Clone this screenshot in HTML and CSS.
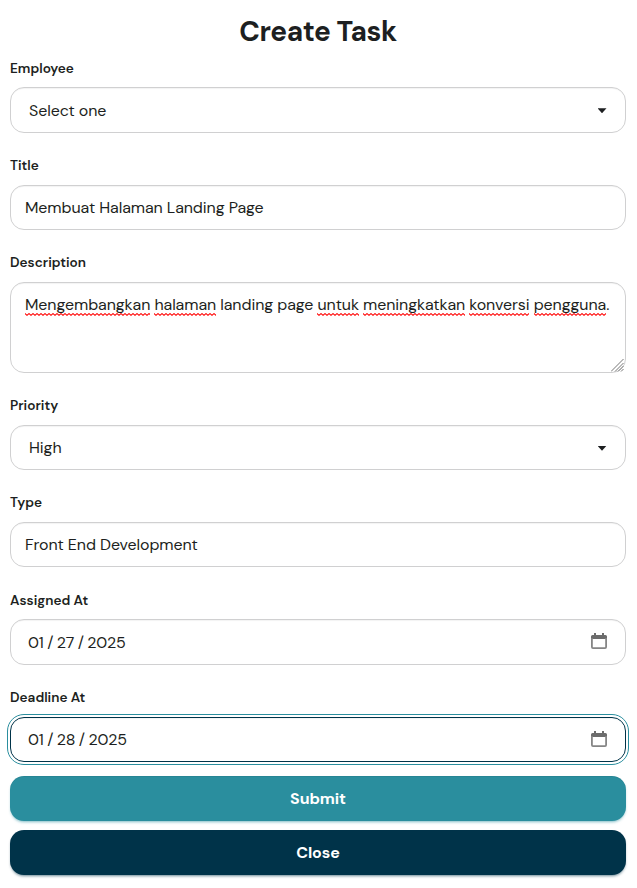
FILE: index.html
```html
<!DOCTYPE html>
<html lang="en">
<head>
<meta charset="utf-8">
<title>Create Task</title>
<link rel="stylesheet" href="styles.css">
</head>
<body>
<form class="task-form">
  <h1 class="heading">Create Task</h1>
  <div class="field">
    <div class="label">Employee</div>
    <div class="control select"><span>Select one</span><i class="caret"></i></div>
  </div>
  <div class="field">
    <div class="label">Title</div>
    <div class="control"><span>Membuat Halaman Landing Page</span></div>
  </div>
  <div class="field">
    <div class="label">Description</div>
    <div class="control textarea"><span><u>Mengembangkan</u> <u>halaman</u> landing page <u>untuk</u> <u>meningkatkan</u> <u>konversi</u> <u>pengguna</u>.</span>
      <svg class="grip" width="14" height="14" viewBox="0 0 14 14"><path d="M0 13.500 12.500 1M4 13.500l8.500-8.500M7 13.500l5.500-5.500M10 13.500l2.500-2.500"/></svg>
    </div>
  </div>
  <div class="field">
    <div class="label">Priority</div>
    <div class="control select"><span>High</span><i class="caret"></i></div>
  </div>
  <div class="field">
    <div class="label">Type</div>
    <div class="control"><span>Front End Development</span></div>
  </div>
  <div class="field">
    <div class="label">Assigned At</div>
    <div class="control date"><span class="date-value">01 / 27 / 2025</span>
      <svg class="calendar" width="16" height="17" viewBox="0 0 16 17"><path class="cal-top" d="M0 6V3.5Q0 2 1.5 2H3V0h2v2h6V0h2v2h1.500Q16 2 16 3.500V6z"/><path class="cal-body" d="M.9 5v9q0 1.100 1.100 1.100h12q1.100 0 1.100-1.100V5"/></svg>
    </div>
  </div>
  <div class="field">
    <div class="label">Deadline At</div>
    <div class="control date focused"><span class="date-value">01 / 28 / 2025</span>
      <svg class="calendar" width="16" height="17" viewBox="0 0 16 17"><path class="cal-top" d="M0 6V3.5Q0 2 1.5 2H3V0h2v2h6V0h2v2h1.500Q16 2 16 3.500V6z"/><path class="cal-body" d="M.9 5v9q0 1.100 1.100 1.100h12q1.100 0 1.100-1.100V5"/></svg>
    </div>
  </div>
  <div class="actions">
    <button type="button" class="btn submit">Submit</button>
    <button type="button" class="btn close">Close</button>
  </div>
</form>
</body>
</html>
```
FILE: styles.css
```css
* { box-sizing: border-box; }
body {
  margin: 0;
  min-height: 888px;
  background: #fff;
  color: #1d1f21;
  font-family: "DM Sans", Inter, "Liberation Sans", sans-serif;
}
.task-form { padding: 10px 11px 0 10px; }
.heading {
  margin: 0;
  height: 41.4px;
  padding-top: 1px;
  font-size: 28px;
  line-height: 41.4px;
  font-weight: 700;
  letter-spacing: -0.42px;
  text-align: center;
}
.field { display: flex; flex-direction: column; margin-bottom: 16px; }
.label {
  height: 36px;
  padding-top: 7.2px;
  font-size: 13.6px;
  line-height: 19px;
  font-weight: 600;
  white-space: nowrap;
}
.control {
  position: relative;
  display: flex;
  align-items: center;
  height: 45.2px;
  padding: 1px 14px 0;
  border: 1px solid #d0d0d1;
  border-radius: 14px;
  box-shadow: inset 0 2px 1px -1px rgba(0, 0, 0, 0.05);
  font-size: 16px;
  font-weight: 400;
  line-height: 24px;
  letter-spacing: -0.09px;
  white-space: nowrap;
}
.select { justify-content: space-between; padding: 1.4px 18.5px 0 18px; }
.textarea { height: 91.2px; align-items: flex-start; padding-top: 10px; }
.textarea u {
  padding-bottom: 1px;
  text-decoration: none;
  background: url("data:image/svg+xml,%3Csvg xmlns='http://www.w3.org/2000/svg' width='4' height='3'%3E%3Cpath d='M-2 2.300L0 .6L2 2.300L4 .6L6 2.300' fill='none' stroke='red' stroke-width='1.100'/%3E%3C/svg%3E") repeat-x left bottom;
}
.date { justify-content: space-between; padding: 1.4px 18px 0 17px; }
.date-value { word-spacing: -0.7px; }
.calendar { margin-top: -1.4px; }
.focused { border-color: #003349; outline: 1px solid #2a8e9e; outline-offset: 2px; }
.caret {
  width: 9px;
  height: 5px;
  background: #1d1f21;
  clip-path: polygon(0 0, 100% 0, 50% 100%);
}
.grip { position: absolute; right: 0; bottom: 0; fill: none; stroke: #777; }
.cal-top { fill: #6c6c6c; }
.cal-body { fill: none; stroke: #858585; stroke-width: 1.8; }
.actions { display: flex; flex-direction: column; gap: 9px; margin-top: -2px; }
.btn {
  height: 45px;
  padding: 0;
  border: 0;
  border-radius: 14px;
  color: #fff;
  font: 700 16px/45px "DM Sans", Inter, "Liberation Sans", sans-serif;
  letter-spacing: -0.09px;
}
.submit { background: #2a8e9e; box-shadow: 0 2px 3px -1px rgba(42, 142, 158, 0.6), inset 0 1px rgba(0, 0, 0, 0.06); }
.close { background: #003349; box-shadow: 0 2px 3px -1px rgba(0, 51, 73, 0.6); }
```
